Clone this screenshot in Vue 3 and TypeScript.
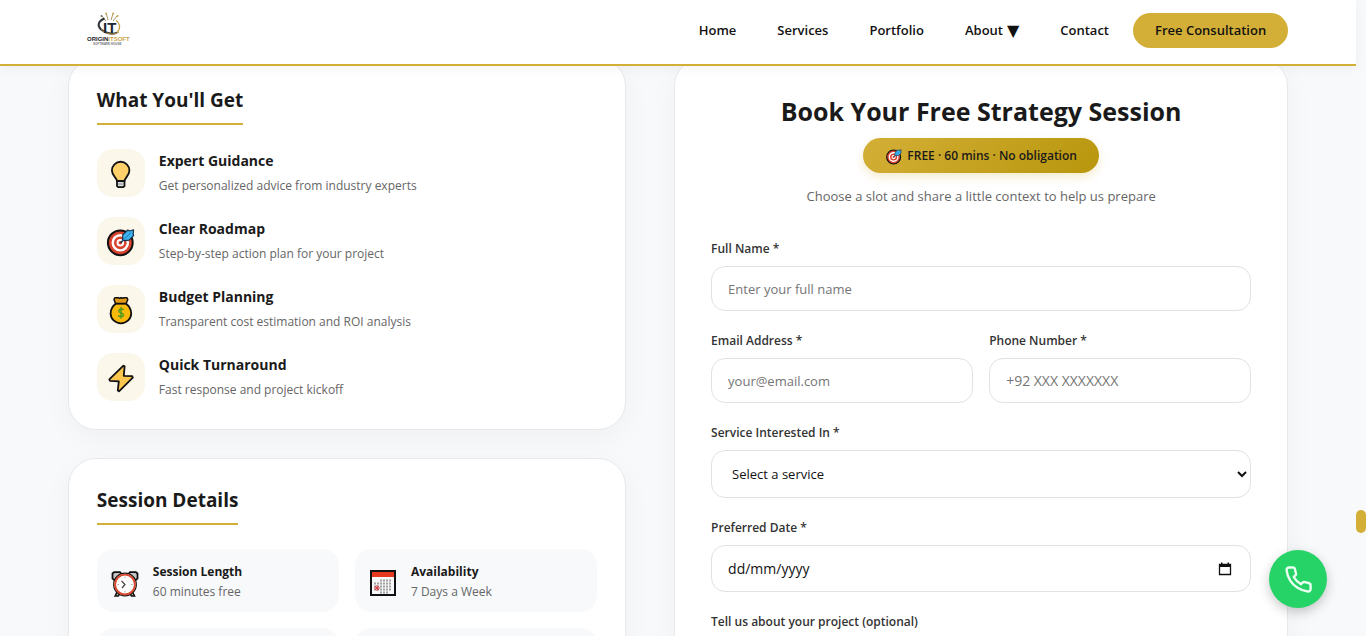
<script setup lang="ts">
import { ref } from 'vue'

type Glyph = 'bulb' | 'target' | 'bag' | 'bolt'

interface Benefit {
  icon: Glyph
  title: string
  text: string
}

interface Detail {
  icon: 'clock' | 'calendar'
  title: string
  text: string
}

interface NavLink {
  label: string
  menu?: boolean
}

const links: NavLink[] = [
  { label: 'Home' },
  { label: 'Services' },
  { label: 'Portfolio' },
  { label: 'About', menu: true },
  { label: 'Contact' },
]

const benefits: Benefit[] = [
  { icon: 'bulb', title: 'Expert Guidance', text: 'Get personalized advice from industry experts' },
  { icon: 'target', title: 'Clear Roadmap', text: 'Step-by-step action plan for your project' },
  { icon: 'bag', title: 'Budget Planning', text: 'Transparent cost estimation and ROI analysis' },
  { icon: 'bolt', title: 'Quick Turnaround', text: 'Fast response and project kickoff' },
]

const details: Detail[] = [
  { icon: 'clock', title: 'Session Length', text: '60 minutes free' },
  { icon: 'calendar', title: 'Availability', text: '7 Days a Week' },
]

const fullName = ref('')
const email = ref('')
const phone = ref('')
const service = ref('')
const date = ref('')
const notes = ref('')
</script>

<template>
  <div class="page">
    <svg class="defs" width="0" height="0" aria-hidden="true">
      <symbol id="target" viewBox="0 0 32 32">
        <circle cx="15.3" cy="17.8" r="12.4" fill="#d8432f" stroke="#111" stroke-width="2" />
        <circle cx="15.3" cy="17.8" r="7.6" fill="none" stroke="#fff" stroke-width="2.4" />
        <circle cx="15.3" cy="17.8" r="2.8" fill="#d8432f" stroke="#fff" stroke-width="2" />
        <path d="M15.5 18 21 12" stroke="#222" stroke-width="1.6" />
        <path d="M17.600 15 17.800 9.800 22.800 5 24.600 6 28.600 4.800 28.200 9 28.600 10.600 24 15.200 19.600 15.600Z" fill="#3fb4f0" stroke="#14304a" stroke-width="1.2" stroke-linejoin="round" />
        <path d="M16.500 16.600 26 7.600" stroke="#1878bd" stroke-width="1" />
      </symbol>
    </svg>

    <header class="topbar">
      <div class="wrap topbar-inner">
        <a class="brand" href="#" aria-label="Origin IT Soft">
          <svg width="82" height="48" viewBox="0 0 82 48">
            <path d="M38 14 34 9M40 13 38.500 7M43 13 45 7M45 14 49 9" stroke="#a8966a" stroke-width="1" fill="none" />
            <circle cx="33.500" cy="9" r="1" fill="#6e6a60" />
            <circle cx="38" cy="6.500" r="1" fill="#c6a04a" />
            <circle cx="45.200" cy="6.500" r="1" fill="#c6a04a" />
            <circle cx="49.500" cy="9" r="1" fill="#c6a04a" />
            <path d="M36.500 11.500C30 14 29 19 33 22.500 37 26 45 28 49 25.500" fill="none" stroke="#30343b" stroke-width="2" />
            <path d="M33 22.500C37 26.500 45 29 51 25" fill="none" stroke="#b38a3d" stroke-width="1" />
            <path d="M48 13.500C52 16 53 21 49.500 25" fill="none" stroke="#cda349" stroke-width="1.400" />
            <text x="35" y="25.500" class="mono">IT</text>
            <text x="19" y="33.500" class="name">ORIGIN<tspan fill="#cda349">ITSOFT</tspan></text>
            <text x="25" y="37.500" class="tag">SOFTWARE HOUSE</text>
          </svg>
        </a>
        <nav class="nav">
          <a v-for="link in links" :key="link.label" href="#">
            {{ link.label }}<span v-if="link.menu" class="caret">▼</span>
          </a>
          <a class="cta" href="#">Free Consultation</a>
        </nav>
      </div>
    </header>

    <main class="wrap columns">
      <div class="side">
        <section class="card">
          <h2>What You'll Get</h2>
          <ul class="benefits">
            <li v-for="b in benefits" :key="b.title">
              <span class="chip">
                <svg width="32" height="32" viewBox="0 0 32 32" aria-hidden="true">
                  <g v-if="b.icon === 'bulb'" stroke="#111" stroke-width="1.8" stroke-linejoin="round">
                    <path d="M12 24V29L13.500 30.200H18L19.500 29V24Z" fill="#d9dcdf" />
                    <path d="M12 24C12 21 6.900 19 6.900 13.500A8.700 8.700 0 0 1 24.400 13.500C24.400 19 19.500 21 19.500 24Z" fill="#fdd06a" />
                    <path d="M13 27H18.500" stroke="#8a8f94" stroke-width="1" />
                  </g>
                  <use v-else-if="b.icon === 'target'" href="#target" />
                  <g v-else-if="b.icon === 'bag'">
                    <path d="M11 10.500C7.500 13 5.600 16.500 5.600 20.500A10.300 9.800 0 0 0 26.200 20.500C26.200 16.500 24.300 13 20.800 10.500Z" fill="#f8b90b" stroke="#111" stroke-width="1.800" />
                    <path d="M10.500 10.500 9 6.500 9.800 4.700H13L14.500 5.300 16 4.700 17.500 5.300 19 4.700H22L22.800 6.500 21.200 10.500Z" fill="#e39a17" stroke="#111" stroke-width="1.500" stroke-linejoin="round" />
                    <path d="M18.600 16.800C17.800 15.600 13.800 15.500 13.800 17.900 13.800 20.600 18.400 19.200 18.400 21.900 18.400 24.200 14.200 23.900 13.200 22.500M16 14V25.500" fill="none" stroke="#4b9a1f" stroke-width="1.400" />
                  </g>
                  <path v-else d="M18.400 4.700 4.300 18.300 5 19.800 13.800 20.300 12.800 29.500 14 30.300 27.800 16.600 27.200 15.200 18.800 14.800 19.600 5.400Z" fill="#fdc64f" stroke="#111" stroke-width="1.8" stroke-linejoin="round" />
                </svg>
              </span>
              <div>
                <h3>{{ b.title }}</h3>
                <p>{{ b.text }}</p>
              </div>
            </li>
          </ul>
        </section>

        <section class="card">
          <h2>Session Details</h2>
          <div class="tiles">
            <div v-for="d in details" :key="d.title" class="tile">
              <svg v-if="d.icon === 'clock'" width="28" height="32" viewBox="0 0 28 32" aria-hidden="true">
                <path d="M6 26 4.200 30H7.200L9 27.500M21.500 26 23.500 30H20.500L18.800 27.500" fill="#ccc" stroke="#111" stroke-width="1.600" />
                <path d="M1.500 12.500V7.500L3 6.200H9L10.500 8 4 14.500ZM26.500 12.500V7.500L25 6.200H19L17.500 8 24 14.500Z" fill="#c4c6c8" stroke="#111" stroke-width="1.800" stroke-linejoin="round" />
                <circle cx="14" cy="18.500" r="11.300" fill="#fff" stroke="#111" stroke-width="1.200" />
                <circle cx="14" cy="18.500" r="9.900" fill="#fff" stroke="#d8492f" stroke-width="1.900" />
                <path d="M10.500 15 14 18.500 11 22" fill="none" stroke="#444" stroke-width="1.200" />
                <path d="M14 10.500V12M14 25V26.500M6.500 18.500H8M20 18.500H21.500" stroke="#aaa" />
              </svg>
              <svg v-else width="28" height="32" viewBox="0 0 28 32" aria-hidden="true">
                <rect x="2" y="5" width="24" height="24" fill="#f7f7f7" stroke="#111" stroke-width="2" />
                <rect x="3" y="6" width="22" height="5" fill="#e4391f" />
                <path d="M11 14.500H23M5 17.500H23M5 20.500H23M5 23.500H23M11 26.500H20" stroke="#a2a2a2" stroke-width="2" stroke-dasharray="2 1" />
                <path d="M8 19V25M5 22H11M6 20 10 24M10 20 6 24" stroke="#d5464a" />
              </svg>
              <div>
                <h4>{{ d.title }}</h4>
                <p>{{ d.text }}</p>
              </div>
            </div>
            <div class="tile"></div>
            <div class="tile"></div>
          </div>
        </section>
      </div>

      <section class="card booking">
        <div class="intro">
          <h1>Book Your Free Strategy Session</h1>
          <span class="badge">
            <svg width="18" height="18" viewBox="0 0 32 32" aria-hidden="true"><use href="#target" /></svg>
            FREE · 60 mins · No obligation
          </span>
          <p>Choose a slot and share a little context to help us prepare</p>
        </div>

        <form @submit.prevent>
          <div class="field">
            <label for="name">Full Name *</label>
            <input id="name" v-model="fullName" type="text" placeholder="Enter your full name" />
          </div>
          <div class="pair">
            <div class="field">
              <label for="email">Email Address *</label>
              <input id="email" v-model="email" type="email" placeholder="your@email.com" />
            </div>
            <div class="field">
              <label for="phone">Phone Number *</label>
              <input id="phone" v-model="phone" class="digits" type="tel" placeholder="+92 XXX XXXXXXX" />
            </div>
          </div>
          <div class="field">
            <label for="service">Service Interested In *</label>
            <select id="service" v-model="service">
              <option value="">Select a service</option>
            </select>
          </div>
          <div class="field">
            <label for="date">Preferred Date *</label>
            <div class="date">
              <input id="date" v-model="date" class="digits" type="text" placeholder="dd/mm/yyyy" />
              <button type="button" aria-label="Open calendar">
                <svg width="14" height="14" viewBox="0 0 14 14" aria-hidden="true">
                  <path d="M1.500 2.500H12.500V12.500H1.500Z" fill="none" stroke="#111" stroke-width="1.300" />
                  <path d="M1 2H13V5H1ZM3 .5H4.500V2H3ZM9.500 .5H11V2H9.500Z" fill="#111" />
                </svg>
              </button>
            </div>
          </div>
          <div class="field">
            <label for="notes">Tell us about your project (optional)</label>
            <textarea id="notes" v-model="notes" rows="4"></textarea>
          </div>
        </form>
      </section>
    </main>

    <button class="call" type="button" aria-label="Call us">
      <svg width="29" height="29" viewBox="0 0 24 24" fill="none" stroke="#e9fff0" stroke-width="2" stroke-linecap="round" stroke-linejoin="round" aria-hidden="true">
        <path d="M22 16.920v3a2 2 0 0 1-2.180 2 19.790 19.790 0 0 1-8.630-3.070 19.500 19.500 0 0 1-6-6 19.790 19.790 0 0 1-3.070-8.670A2 2 0 0 1 4.110 2h3a2 2 0 0 1 2 1.720 12.840 12.840 0 0 0 .7 2.810 2 2 0 0 1-.45 2.110L8.090 9.910a16 16 0 0 0 6 6l1.270-1.270a2 2 0 0 1 2.110-.45 12.840 12.840 0 0 0 2.810.7A2 2 0 0 1 22 16.920z" />
      </svg>
    </button>
    <div class="rail"><span></span></div>
  </div>
</template>

<style>
html,
body {
  height: 100%;
  overflow: hidden;
}
</style>

<style scoped>
.page {
  position: relative;
  height: 100vh;
  overflow: hidden;
  box-sizing: border-box;
  padding-right: 10px;
  background: #f8f9fb;
  color: #1a1a1a;
  font-family: 'Segoe UI', 'Open Sans', 'Noto Sans', sans-serif;
}

.page *,
.page *::before {
  box-sizing: border-box;
}

.defs {
  position: absolute;
}

h1,
h2,
h3,
h4,
p,
ul {
  margin: 0;
  padding: 0;
}

.wrap {
  width: 90%;
  margin: 0 auto;
}

.topbar {
  position: absolute;
  inset: 0 10px auto 0;
  z-index: 2;
  background: #fff;
  border-bottom: 2px solid #d4af37;
  box-shadow: 0 2px 12px rgba(0, 0, 0, 0.05);
}

.topbar-inner {
  display: flex;
  align-items: center;
  justify-content: space-between;
  height: 64px;
  padding-bottom: 3px;
}

.brand {
  display: block;
  height: 48px;
}

.mono {
  font: bold 15px 'Liberation Sans', sans-serif;
  fill: #202734;
}

.name {
  font: bold 6px 'Liberation Sans', sans-serif;
  fill: #1d2026;
}

.tag {
  font: bold 3px 'Liberation Sans', sans-serif;
  fill: #74767a;
}

.nav {
  display: flex;
  align-items: center;
  gap: 41px;
}

.nav a {
  display: flex;
  align-items: center;
  gap: 4px;
  color: #111;
  font-size: 13px;
  font-weight: 600;
  line-height: 19px;
  text-decoration: none;
}

.caret {
  font-family: 'DejaVu Sans', sans-serif;
  font-size: 16px;
}

.nav .cta {
  margin-left: -17px;
  padding: 8px 22px;
  border-radius: 18px;
  background: #d4af37;
}

.columns {
  display: grid;
  grid-template-columns: 1fr 1.1fr;
  gap: 48px;
  padding-top: 58px;
}

.side {
  display: flex;
  flex-direction: column;
  gap: 28px;
}

.card {
  padding: 28px;
  border: 1px solid #e6e8eb;
  border-radius: 28px;
  background: #fff;
  box-shadow: 0 8px 30px rgba(0, 0, 0, 0.04);
}

.card h2 {
  width: fit-content;
  margin-bottom: 24px;
  padding-bottom: 10px;
  border-bottom: 2px solid #d4af37;
  font-size: 19px;
  font-weight: 700;
  line-height: 26px;
}

.benefits {
  display: grid;
  gap: 20px;
  list-style: none;
}

.benefits li {
  display: flex;
  align-items: flex-start;
  gap: 14px;
}

.chip {
  display: grid;
  place-items: center;
  width: 48px;
  height: 48px;
  border-radius: 16px;
  background: #fbf7eb;
}

.benefits h3 {
  margin-bottom: 3px;
  font-size: 14px;
  font-weight: 700;
  line-height: 24px;
}

.benefits p {
  color: #666;
  font-size: 12px;
  line-height: 20px;
}

.tiles {
  display: grid;
  grid-template-columns: 1fr 1fr;
  gap: 16px;
}

.tile {
  display: flex;
  align-items: center;
  gap: 14px;
  min-height: 63px;
  padding: 2px 14px 0;
  border-radius: 16px;
  background: #f8f9fb;
}

.tile h4 {
  font-size: 12px;
  font-weight: 700;
  line-height: 20px;
}

.tile p {
  color: #666;
  font-size: 12px;
  line-height: 20px;
}

.booking {
  padding: 36px;
}

.intro {
  display: flex;
  flex-direction: column;
  align-items: center;
  margin-bottom: 33px;
  text-align: center;
}

.intro h1 {
  margin-bottom: 10px;
  font-size: 25px;
  font-weight: 700;
  line-height: 33px;
}

.badge {
  display: inline-flex;
  align-items: center;
  gap: 4px;
  height: 35px;
  margin-bottom: 13px;
  padding: 0 22px;
  border-radius: 18px;
  background: linear-gradient(135deg, #d4af37, #b8960c);
  box-shadow: 0 4px 10px rgba(212, 175, 55, 0.25);
  font-size: 12px;
  font-weight: 600;
}

.intro p {
  color: #666;
  font-size: 13px;
  line-height: 20px;
}

form {
  display: grid;
  gap: 20px;
}

.pair {
  display: grid;
  grid-template-columns: 1fr 1fr;
  gap: 16px;
}

.field {
  display: flex;
  flex-direction: column;
  gap: 7px;
  min-width: 0;
}

label {
  color: #333;
  font-size: 12px;
  font-weight: 600;
  line-height: 20px;
}

input,
select,
textarea {
  width: 100%;
  height: 45px;
  padding: 0 16px;
  border: 1px solid #e0e2e5;
  border-radius: 14px;
  background: #fff;
  color: #111;
  font-family: inherit;
  font-size: 13px;
}

.digits {
  font-size: 14px;
}

input::placeholder {
  color: #757575;
}

select {
  height: 48px;
}

.date {
  position: relative;
}

.date input {
  display: block;
  height: 47px;
}

.date input::placeholder {
  color: #111;
}

.date button {
  position: absolute;
  top: 0;
  right: 16px;
  display: grid;
  place-items: center;
  width: 20px;
  height: 100%;
  padding: 0;
  border: 0;
  background: none;
}

textarea {
  height: 110px;
}

.call {
  position: absolute;
  right: 39px;
  bottom: 28px;
  z-index: 3;
  display: grid;
  place-items: center;
  width: 58px;
  height: 58px;
  padding: 0;
  border: 0;
  border-radius: 50%;
  background: #25d366;
  box-shadow: 0 4px 12px rgba(0, 0, 0, 0.22);
}

.rail {
  position: absolute;
  inset: 0 0 0 auto;
  width: 10px;
  background: #f8f9fb;
}

.rail span {
  position: absolute;
  bottom: 103px;
  width: 10px;
  height: 23px;
  border-radius: 5px;
  background: #d4af37;
}
</style>
